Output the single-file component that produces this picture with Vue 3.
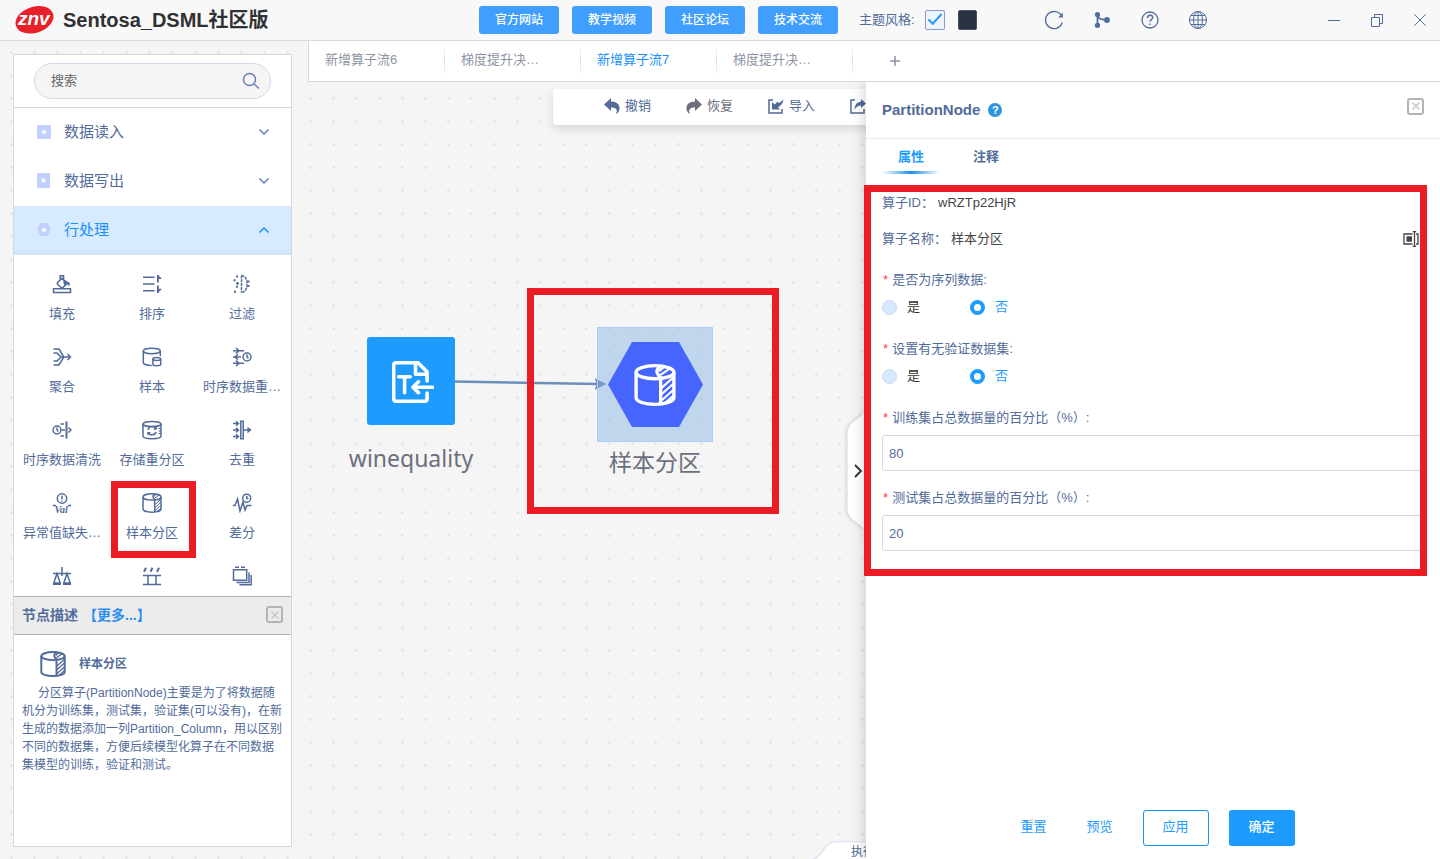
<script setup>
import { ref } from 'vue'

const partition =
  '<ellipse cx="10" cy="3.9" rx="9" ry="3.1"/><path d="M1 3.9v12.2c0 1.8 4 3.1 9 3.1s9-1.3 9-3.1V3.9M12.7 7v12M12.7 1.2c-1.3 .7-1.8 1.5-1.8 2.4s.9 2 1.9 3.1"/><path stroke-width="1" d="M12 3.4l2.2-1.9M12.6 5.2l4.4-3M13 11.5l5.6-5M13 14.5l5.8-5.2M13 17.5l5.8-5.2M15 18.4l4-3.5"/>'

const icons = {
  fill: '<path d="M1.5 14.8h17v3.7h-17zM4.8 9.5L10 4.2l5.4 5.2L10 14.2 4.8 9.5M8.2 6V1.8h3.4V6"/><path class="solid" d="M11 5l6.5 3.8c.8 1 .2 3-.8 3.2l-1.7-2.4-3 1.6z"/>',
  sort: '<path d="M1 3.2h11.500M1 10h11.500M1 16.800h11.500"/><path stroke-width="1.800" d="M15.900 1v7.500M15.900 11.500V19"/><path class="solid" d="M15.500 1l4 3.200v.8h-4zM15.500 19l4-3.500v-.8h-4z"/>',
  filter: '<path d="M9.500 1.500v17M9.500 1.500c7.500 0 7.500 17 0 17" stroke-dasharray="3 .8"/><path stroke-width="2" stroke-dasharray="2 2" d="M1.500 6.300h2M4 12.800h4M2 17.800h2M4 2.500h2M15.500 7.500h4M15.500 12h4"/><circle class="solid" cx="5.500" cy="9.500" r="1.400"/>',
  merge: '<path d="M1.500 2H7l4.500 7.500M1.500 6h3.500l4 4-4 4H1.500M1.500 18H7l4.500-7.500M9 10h9.500M15.500 7l3 3-3 3"/>',
  sample: '<ellipse cx="9.800" cy="4" rx="8.500" ry="2.700"/><path d="M1.300 4v11.500c0 1.500 3.200 3 8.500 3M18.300 4v5"/><ellipse cx="14.800" cy="12" rx="3.900" ry="1.500"/><path d="M10.900 12v5.300c0 2 7.800 2 7.800 0V12"/>',
  resample: '<path d="M1 3.700h11M1 10h8M1 16.300h11M4 1l3 2.700-3 2.700M6 7.300L3 10l3 2.700M4 13.600l3 2.700-3 2.700"/><circle cx="15" cy="10" r="4"/><path d="M15 7.500V10l1.500 1.500"/>',
  clean: '<circle cx="5" cy="10" r="3.900"/><path d="M5 7.500V10l1.200 1.500M8.500 4H12M9.500 10H13M8.500 16H12M16.500 7.500L19 10l-2.500 2.500"/><path stroke-width="2" d="M14.500 1.500v17"/>',
  repart: '<ellipse cx="10" cy="4" rx="9" ry="2.600"/><path d="M1 4v12c0 3.500 18 3.500 18 0V4M6 10c.5-4 6-4.500 8-1.500M14 7v2h-2.300M14 12c-.8 3.500-6 3.800-8 1M6 14.800v-2h2.300"/><path stroke-width="1" d="M16.500 8.500H19M16.500 11H19M16.500 13.500H19"/>',
  dedup: '<path d="M1 3.500h5M1 10h5M1 16.500h5M4 1.200l2.500 2.300L4 5.800M4 7.700L6.500 10 4 12.300M4 14.200l2.500 2.300L4 18.800M12 10h7"/><path class="solid" d="M15.500 6.800l4 3.200-4 3.200z"/><path d="M8.800 1.200h2.400v17.600H8.800z"/>',
  outlier: '<circle cx="10" cy="5.500" r="4.700"/><path d="M10 2.700v3.500M10 7.400v1M.8 12.500h3M16 12.500h3.200"/><text x="2.500" y="19.500" class="val">Val</text>',
  partition,
  diff: '<path d="M.8 12.500H3L5.500 6l2.500 12L11 9l2 8 2-4.500h4.500"/><circle cx="14.700" cy="5.200" r="4"/><path d="M14.700 3v2.400h1.800"/>',
  balance: '<path d="M10 1v9M1 7.500h18M5 7.500L1.800 17h6.400zM15 7.500L11.800 17h6.400zM1 18.300h8M11 18.300h8"/>',
  bucket: '<path d="M1 9.500h18M1 18.500h18M6 9.500v9M14 9.500v9"/><path stroke-width="2" d="M2 5.800l2-4M8.500 5.800l2-4M15 5.800l2-4"/>',
  stack: '<path d="M1.500 3.700h13.200v10.500H1.500zM17 6.500v10H4.500M19.200 9v9.700H7.500M3 1.300h4M9 1.300h4"/>'
}

const groups = [
  { name: '数据读入', shape: 'sq' },
  { name: '数据写出', shape: 'sq tall' }
]

const operators = [
  ['fill', '填充'], ['sort', '排序'], ['filter', '过滤'],
  ['merge', '聚合'], ['sample', '样本'], ['resample', '时序数据重…'],
  ['clean', '时序数据清洗'], ['repart', '存储重分区'], ['dedup', '去重'],
  ['outlier', '异常值缺失…'], ['partition', '样本分区'], ['diff', '差分'],
  ['balance', ''], ['bucket', ''], ['stack', '']
]

const links = ['官方网站', '教学视频', '社区论坛', '技术交流']
const flows = ['新增算子流6', '梯度提升决…', '新增算子流7', '梯度提升决…']
const activeFlow = ref(2)

const tools = [
  { name: '撤销', cls: '', art: '<path class="solid" d="M7 0v3.500c6 0 9 3.500 8.500 7.500-.2 2.500-1.500 4-3.500 5 2-4 .5-6.500-5-6.500V13L0 6.500z"/>' },
  { name: '恢复', cls: 'grey', art: '<path class="solid" d="M9 0v3.500C3 3.500 0 7 .5 11c.2 2.500 1.500 4 3.500 5-2-4-.5-6.500 5-6.500V13l7-6.500z"/>' },
  { name: '导入', cls: '', art: '<path stroke-width="1.500" d="M5 2H1v13h13v-4"/><path class="solid" d="M4 4v7.500h8L10 9.300c3-1.500 5-4 5.500-7.800-2 2-3.500 3-5 3.500L9.500 3.500 6.800 6.500z"/>' },
  { name: '', cls: '', art: '<path stroke-width="1.500" d="M5 2H1v13h13v-4"/><path class="solid" d="M11 1l5 4.500-5 4.500V7.500C8 7.500 6 9 4.500 12 4.500 7 7 4 11 3.800z"/>' }
]

const isSeries = ref('否')
const hasValidation = ref('否')
const train = ref('80')
const test = ref('20')
const light = ref(true)
const keyword = ref('')
</script>

<template>
  <div class="app">
    <header class="top">
      <svg class="logo" viewBox="0 0 40 30" aria-label="znv">
        <ellipse cx="20.500" cy="15" rx="19.500" ry="13" transform="rotate(-18 20 15)" fill="#e8202a" stroke="none" />
        <text x="4" y="19.500" class="logo-text">znv</text>
      </svg>
      <h1>Sentosa_DSML社区版</h1>
      <nav class="links">
        <button v-for="l in links" :key="l">{{ l }}</button>
      </nav>
      <label class="theme" for="light">主题风格:</label>
      <input id="light" v-model="light" class="tick" type="checkbox" />
      <button class="dark" aria-label="深色"></button>
      <div class="utils">
        <button aria-label="刷新"><svg viewBox="0 0 20 20"><path d="M17.800 6.500A8.500 8.500 0 1 0 18.200 12.500" /><path class="solid" d="M18.800 2.500v5h-4.500z" /></svg></button>
        <button aria-label="流程"><svg viewBox="0 0 20 20"><path stroke-width="1.800" d="M5.500 5v10M5.500 5.500c1 3.500 4 4.500 9 4.500" /><g class="solid"><circle cx="5.500" cy="4.500" r="2.600" /><circle cx="5.500" cy="15.300" r="2.600" /><circle cx="15" cy="10" r="2.900" /></g></svg></button>
        <button aria-label="帮助"><svg viewBox="0 0 20 20"><circle cx="10" cy="10" r="8" /><path stroke-width="1.500" d="M7.500 8c0-3.800 5.200-3.300 5.200-.5 0 2-2.700 2-2.700 4.300M10 13.500v1.500" /></svg></button>
        <button aria-label="语言"><svg class="thin" viewBox="0 0 20 20"><circle cx="10" cy="10" r="8.500" /><ellipse cx="10" cy="10" rx="4.500" ry="8.500" /><path d="M10 1.500v17M1.500 10h17M3 5.500h14M3 14.500h14" /></svg></button>
      </div>
      <div class="win">
        <button aria-label="最小化"><svg class="thin" viewBox="0 0 14 14"><path d="M1 7.500h12" /></svg></button>
        <button aria-label="还原"><svg class="thin" viewBox="0 0 14 14"><path d="M1.500 4.500h8v9h-8zM4.500 4.500v-3h8v9h-3" /></svg></button>
        <button aria-label="关闭"><svg class="thin" viewBox="0 0 14 14"><path d="M1.500 1.500l11 11M12.500 1.500l-11 11" /></svg></button>
      </div>
    </header>

    <div class="body">
      <aside class="side">
        <div class="search">
          <input v-model="keyword" type="text" placeholder="搜索" aria-label="搜索" />
          <svg viewBox="0 0 18 18"><circle cx="7.500" cy="7.500" r="6" /><path d="M12 12l5 4.500" /></svg>
        </div>
        <button v-for="g in groups" :key="g.name" class="group">
          <i :class="g.shape"></i>{{ g.name }}
          <svg viewBox="0 0 12 8"><path d="M1.500 1.500L6 6l4.500-4.500" /></svg>
        </button>
        <button class="group open">
          <i class="hex"></i>行处理
          <svg viewBox="0 0 12 8"><path d="M1.500 6.500L6 2l4.500 4.500" /></svg>
        </button>
        <div class="ops">
          <button v-for="o in operators" :key="o[0]" class="op" :class="{ marked: o[0] === 'partition' }">
            <svg viewBox="0 0 20 20" v-html="icons[o[0]]"></svg>
            <span v-if="o[1]">{{ o[1] }}</span>
          </button>
        </div>
        <div class="desc-head">
          <strong>节点描述</strong><a href="#more">【更多...】</a>
          <button class="x" aria-label="关闭描述"><svg viewBox="0 0 10 10"><path d="M1.500 1.500l7 7M8.500 1.500l-7 7" /></svg></button>
        </div>
        <div class="desc">
          <h2><svg viewBox="0 0 20 20" v-html="icons.partition"></svg>样本分区</h2>
          <p>分区算子(PartitionNode)主要是为了将数据随机分为训练集，测试集，验证集(可以没有)，在新生成的数据添加一列Partition_Column，用以区别不同的数据集，方便后续模型化算子在不同数据集模型的训练，验证和测试。</p>
        </div>
      </aside>

      <main class="work">
        <nav class="flows">
          <button v-for="(f, i) in flows" :key="i" :class="{ on: i === activeFlow }" @click="activeFlow = i">{{ f }}</button>
          <button class="add" aria-label="新增"><svg viewBox="0 0 12 12"><path d="M6 1v10M1 6h10" /></svg></button>
        </nav>

        <div class="stage">
          <section class="canvas">
            <div class="toolbar">
              <button v-for="(t, i) in tools" :key="i" :class="t.cls"><svg viewBox="0 0 16 16" v-html="t.art"></svg>{{ t.name }}</button>
            </div>

            <svg class="edge" viewBox="0 0 156 20">
              <path d="M0 8.500L144 11" stroke="#6b8fb8" stroke-width="2.600" />
              <path d="M142 6.500l9 4.600-9 4.400 1.500-4.500z" fill="#5f83ad" stroke="#5f83ad" />
            </svg>
            <div class="node source">
              <svg viewBox="0 0 20 20">
                <path d="M16.700 9.500V5.100L12.400.8H2Q.8 .8 .8 2v16q0 1.200 1.200 1.200h13.500q1.200 0 1.200-1.200v-2.800M11.200 1v5.300h5.300M3.200 7.500h5.500M6 7.500v7.600M19.300 12.500H10M12.600 9.900L10 12.500l2.600 2.600" />
              </svg>
            </div>
            <div class="name first">winequality</div>
            <div class="node target">
              <svg class="hexagon" viewBox="0 0 95 85"><path d="M0 42.500L24 0h47l24 42.500L71 85H24z" fill="#4565fe" stroke="none" /></svg>
              <svg class="glyph" viewBox="0 0 20 20" v-html="icons.partition"></svg>
            </div>
            <div class="name second">样本分区</div>
            <div class="mark"></div>

            <button class="handle" aria-label="收起面板">
              <svg viewBox="0 0 19 124"><path class="plate" d="M19 1c-3 6-6 8-10 11C3 16 .5 20 .5 26v74c0 6 2.500 10 8.500 14 4 3 7 5 10 9z" /><path class="arrow" d="M8 57l6 6-6 6" /></svg>
            </button>
            <div class="run">
              <svg viewBox="0 0 60 18"><path d="M0 18.500C10 18 11 1 24 .5H60V19z" /></svg>
              <span>执行</span>
            </div>
          </section>

          <section class="drawer">
            <header>
              <h2>PartitionNode</h2><span class="q">?</span>
              <button class="x" aria-label="关闭"><svg viewBox="0 0 10 10"><path d="M1.500 1.500l7 7M8.500 1.500l-7 7" /></svg></button>
            </header>
            <nav class="tabs">
              <button class="on">属性</button><button>注释</button>
            </nav>
            <form @submit.prevent>
              <div class="row">算子ID：<b>wRZTp22HjR</b></div>
              <div class="row">算子名称：<b>样本分区</b>
                <button type="button" class="rename" aria-label="重命名"><svg viewBox="0 0 16 16"><path d="M9.500 3H1v10h8.500M13 3h2v10h-2M11.500 .8v14.400M9.800 .7h3.400M9.800 15.300h3.400" /><path class="solid" d="M3.500 5.300h5.500v5.400H3.500z" /></svg></button>
              </div>
              <fieldset>
                <legend><em>*</em>是否为序列数据:</legend>
                <label v-for="v in ['是', '否']" :key="v"><input v-model="isSeries" type="radio" name="series" :value="v" /><span>{{ v }}</span></label>
              </fieldset>
              <fieldset>
                <legend><em>*</em>设置有无验证数据集:</legend>
                <label v-for="v in ['是', '否']" :key="v"><input v-model="hasValidation" type="radio" name="valid" :value="v" /><span>{{ v }}</span></label>
              </fieldset>
              <div class="field">
                <label for="train"><em>*</em>训练集占总数据量的百分比（%）:</label>
                <input id="train" v-model="train" type="text" />
              </div>
              <div class="field">
                <label for="test"><em>*</em>测试集占总数据量的百分比（%）:</label>
                <input id="test" v-model="test" type="text" />
              </div>
              <div class="mark form-mark"></div>
            </form>
            <footer>
              <button>重置</button><button>预览</button><button class="line">应用</button><button class="main">确定</button>
            </footer>
          </section>
        </div>
      </main>
    </div>
  </div>
</template>

<style>
body { margin: 0; }
</style>

<style scoped>
.app {
  min-height: 100vh;
  display: flex;
  flex-direction: column;
  overflow: hidden;
  box-sizing: border-box;
  font: 13px/20px "Liberation Sans", "Noto Sans CJK SC", sans-serif;
  color: #526b9b;
  background: #f5f5f5 radial-gradient(circle, #e6e6e8 1px, transparent 2px) 0 41px / 23px 23px;
}
.app *, .app *::before { box-sizing: border-box; }
button { font: inherit; color: inherit; background: none; border: 0; padding: 0; cursor: pointer; }
input { font: inherit; color: inherit; margin: 0; }
h1, h2, p { margin: 0; }
a { color: #2d8cf0; text-decoration: none; }
svg { display: block; fill: none; stroke: currentColor; stroke-width: 1.300; flex: none; }
svg :deep(.solid) { fill: currentColor; stroke: none; }
svg :deep(.val) { font: italic bold 10px "Liberation Serif", serif; fill: currentColor; stroke: none; }
.thin { stroke-width: 1; }

.top { height: 41px; display: flex; align-items: center; background: #f8f8f8; border-bottom: 1px solid #d5d8e3; }
.logo { width: 40px; height: 30px; margin-left: 14px; }
.logo-text { font: italic bold 19px "Liberation Sans", sans-serif; fill: #fff; stroke: none; }
h1 { width: 425px; padding-left: 9px; font-size: 20px; line-height: 28px; color: #303133; white-space: nowrap; }
.links { display: flex; gap: 13px; margin-right: 21px; }
.links button { width: 80px; height: 28px; border-radius: 3px; background: #409eff; color: #fff; font-size: 12px; font-weight: 500; }
.theme { width: 66px; white-space: nowrap; }
.tick { appearance: none; width: 20px; height: 20px; border: 1px solid #8a9cc4; border-radius: 2px; background: #eef3fc; display: grid; place-items: center; }
.tick:checked::before { content: ""; width: 14px; height: 7px; margin-bottom: 5px; border: solid #1e9bff; border-width: 0 0 2px 2px; transform: rotate(-48deg); }
.dark { width: 19px; height: 20px; margin-left: 13px; border-radius: 2px; background: #2a3143; border: 1px solid #4a5268; }
.utils { display: flex; gap: 28px; margin-left: 67px; }
.utils svg { width: 20px; height: 20px; }
.win { display: flex; gap: 29px; margin-left: auto; margin-right: 13px; }
.win svg { width: 14px; height: 14px; }

.body { flex: 1; display: flex; }
.side { width: 279px; margin: 13px 16px 12px 13px; flex: none; background: #fff; border: 1px solid #d5d8e3; display: flex; flex-direction: column; }
.search { height: 53px; flex: none; padding: 8px 20px; display: flex; align-items: center; border-bottom: 1px solid #d5d8e3; }
.search input { width: 100%; height: 36px; padding: 0 40px 2px 16px; border: 1px solid #d5d8e6; border-radius: 18px; background: #f5f5f5; outline: 0; }
.search input::placeholder { color: #666; opacity: 1; }
.search svg { width: 18px; height: 18px; margin-left: -29px; color: #6a7fb8; stroke-width: 1.500; }
.group { height: 49px; flex: none; padding: 0 21px 2px 23px; display: flex; align-items: center; gap: 13px; font-size: 15px; }
.group i { width: 14px; height: 14px; background: radial-gradient(circle, #fff 1px, #c0d0ff 3px); }
.group i.sq { border-radius: 1px; }
.group i.tall { height: 15px; width: 13px; margin-right: 1px; }
.group i.hex { clip-path: polygon(25% 3%, 75% 3%, 100% 50%, 75% 97%, 25% 97%, 0 50%); }
.group svg { width: 12px; height: 8px; margin-left: auto; color: #6a7fb8; stroke-width: 1.500; }
.group.open { color: #1890ff; background: linear-gradient(#d7eaff 85%, #cfe4f9); }
.group.open svg { color: #1890ff; }
.ops { flex: none; height: 341px; overflow: hidden; padding: 9px 3px 0; display: grid; grid-template-columns: repeat(3, 90px); grid-auto-rows: 73px; }
.op { position: relative; display: flex; flex-direction: column; align-items: center; gap: 10px; padding-top: 10px; }
.op svg { width: 20px; height: 20px; stroke-width: 1.500; }
.op span { white-space: nowrap; }
.op.marked::before { content: ""; position: absolute; left: 4px; top: -2px; width: 85px; height: 77px; border: 7px solid #ed1c24; }
.desc-head { height: 39px; flex: none; padding: 0 8px 2px; display: flex; align-items: center; background: #ececec; border: solid #b3b3b3; border-width: 1px 0; font-size: 14px; }
.desc-head a { font-weight: bold; margin-left: 5px; }
.x { width: 17px; height: 17px; margin-left: auto; border: 2px solid #b3b3b3; border-radius: 3px; display: grid; place-items: center; color: #d3c4c4; }
.x svg { width: 10px; height: 10px; stroke-width: 1.500; }
.desc { flex: 1; padding: 15px 8px; font-size: 12px; }
.desc h2 { display: flex; align-items: center; gap: 13px; padding-left: 18px; font-size: 12px; line-height: 28px; }
.desc h2 svg { width: 26px; height: 26px; stroke-width: 1.500; }
.desc p { margin-top: 6px; line-height: 18px; text-indent: 16px; }

.work { flex: 1; min-width: 0; display: flex; flex-direction: column; }
.flows { height: 41px; flex: none; display: flex; background: #fff; border: solid #d5d8e3; border-width: 0 0 1px 1px; color: #8e93a3; }
.flows button { width: 136px; padding: 0 0 3px 16px; text-align: left; white-space: nowrap; border-right: 1px solid; border-image: linear-gradient(#fff 15%, #d5d8e6 50%, #fff 85%) 1; }
.flows .on { color: #1890ff; }
.flows .add { width: 80px; padding: 0 0 0 36px; border: 0; }
.add svg { width: 12px; height: 12px; stroke-width: 1.500; }
.stage { flex: 1; display: flex; }
.canvas { flex: 1; min-width: 0; position: relative; overflow: hidden; }
.toolbar { width: 600px; height: 36px; margin: 7px 0 0 245px; padding: 0 0 2px 51px; display: flex; align-items: center; gap: 35px; background: #fff; border-radius: 4px; box-shadow: 0 4px 10px rgba(0, 0, 0, .12); }
.toolbar button { display: flex; align-items: center; gap: 5px; white-space: nowrap; }
.toolbar svg { width: 16px; height: 16px; }
.toolbar .grey { color: #6d6f7d; }

.edge { position: absolute; left: 146px; top: 291px; width: 156px; height: 20px; }
.node { position: absolute; display: grid; place-items: center; color: #fff; }
.source { left: 59px; top: 255px; width: 88px; height: 88px; border-radius: 3px; background: #1e9bff; }
.source svg { width: 42px; height: 42px; stroke-width: 1.700; stroke-linecap: round; stroke-linejoin: round; margin: 2px 0 0 4px; }
.target { left: 289px; top: 245px; width: 116px; height: 115px; background: rgba(138, 183, 229, .5); border: 1px solid #a9ccfb; }
.target svg { grid-area: 1 / 1; }
.hexagon { width: 95px; height: 85px; }
.glyph { width: 42px; height: 42px; stroke-width: 1.600; }
.name { position: absolute; width: 160px; text-align: center; font: 23px/32px "Noto Sans", "Noto Sans CJK SC", sans-serif; color: #6d6f7d; }
.first { left: 23px; top: 360px; }
.second { left: 267px; top: 364px; }
.mark { position: absolute; left: 219px; top: 206px; width: 252px; height: 226px; border: 7px solid #ed1c24; pointer-events: none; }
.handle { position: absolute; right: 0; top: 326px; }
.handle svg { width: 19px; height: 124px; filter: drop-shadow(-1px 0 2px rgba(90, 100, 160, .3)); }
.plate { fill: #fff; stroke: none; }
.arrow { stroke: #303133; stroke-width: 1.800; }
.run { position: absolute; right: -6px; bottom: 0; width: 60px; height: 18px; }
.run svg { width: 60px; height: 18px; fill: #fff; stroke: #dfe2f0; }
.run span { position: absolute; left: 39px; top: 1px; font-size: 12px; white-space: nowrap; }

.drawer { width: 574px; flex: none; position: relative; display: flex; flex-direction: column; background: #fff; box-shadow: -3px 0 12px rgba(0, 0, 0, .15); clip-path: inset(0 0 0 -20px); }
.drawer header { height: 57px; padding: 0 16px; display: flex; align-items: center; border-bottom: 1px solid #ebebeb; }
.drawer h2 { font-size: 15px; }
.q { width: 14px; height: 14px; margin-left: 8px; border-radius: 7px; background: #2f93dc; color: #fff; font-weight: bold; font-size: 11px; line-height: 14px; text-align: center; }
.drawer header .x { margin-bottom: 8px; }
.tabs { height: 36px; display: flex; padding: 0 16px; gap: 17px; font-weight: bold; }
.tabs button { position: relative; width: 58px; height: 36px; }
.tabs .on { color: #1e9bff; }
.tabs .on::before { content: ""; position: absolute; left: 0; bottom: 1px; width: 58px; height: 3px; background: linear-gradient(90deg, transparent, #1e8ff0, transparent); }
form { position: relative; padding: 10px 16px 24px; }
.row { height: 36px; display: flex; align-items: center; }
.row b { font-weight: normal; color: #444; margin-left: 4px; }
.rename { margin-left: auto; margin-right: 5px; color: #444; }
.rename svg { width: 16px; height: 16px; }
fieldset { border: 0; margin: 13px 0 22px; padding: 0; display: flex; gap: 50px; min-width: 0; }
fieldset + fieldset { margin-top: 0; }
legend { padding: 0 0 7px; }
em { font-family: "Liberation Mono", monospace; font-size: 12px; line-height: 12px; color: #ff2d2d; font-style: normal; margin-right: 3px; }
fieldset label { display: flex; align-items: center; gap: 10px; color: #333; }
input[type="radio"] { appearance: none; width: 15px; height: 15px; border-radius: 8px; border: 1px solid #ccd9ee; background: #d6eaff; }
input[type="radio"]:checked { border: 4px solid #1e9bff; background: #fff; }
input[type="radio"]:checked + span { color: #1e9bff; }
.field { margin-bottom: 17px; }
.field label { display: block; margin-bottom: 7px; height: 20px; }
.field input { display: block; width: 100%; height: 36px; padding: 0 6px; border: 1px solid #d5d8e6; border-radius: 3px; }
.form-mark { left: -2px; right: 13px; top: 10px; bottom: auto; width: auto; height: 391px; }
footer { margin-top: auto; padding: 0 11px 13px 0; display: flex; justify-content: center; }
footer button { width: 66px; height: 36px; color: #1e9bff; border-radius: 3px; padding-bottom: 2px; }
footer .line { border: 1px solid #1890ff; margin: 0 20px 0 10px; }
footer .main { background: #1e9bff; color: #fff; font-weight: 500; }
</style>
